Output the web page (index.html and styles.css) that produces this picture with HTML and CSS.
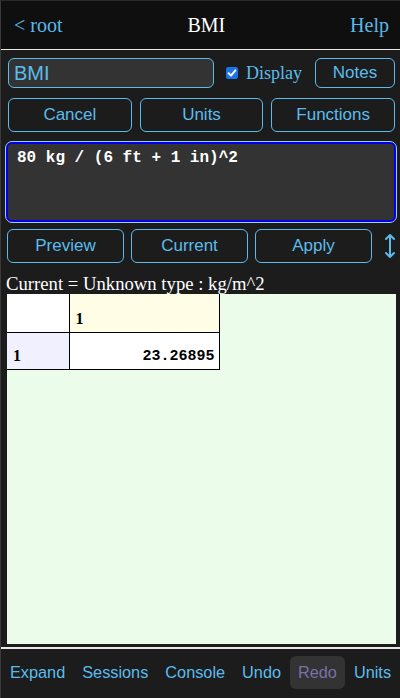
FILE: index.html
```html
<!DOCTYPE html>
<html>
<head>
<meta charset="utf-8">
<link rel="stylesheet" href="styles.css">
</head>
<body>
<div class="app">
  <header class="topbar">
    <span class="link">&lt; root</span>
    <span class="title">BMI</span>
    <span class="link">Help</span>
  </header>
  <main class="content">
    <div class="row row-name">
      <div class="name-input">BMI</div>
      <label class="display"><span class="check"><svg width="12" height="12" viewBox="0 0 12 12"><path d="M2.6 6.2 L5 8.6 L9.4 3.4" fill="none" stroke="#fff" stroke-width="2" stroke-linecap="round" stroke-linejoin="round"/></svg></span>Display</label>
      <button class="btn btn-notes">Notes</button>
    </div>
    <div class="row row-three">
      <button class="btn">Cancel</button>
      <button class="btn">Units</button>
      <button class="btn">Functions</button>
    </div>
    <div class="editor">80 kg / (6 ft + 1 in)^2</div>
    <div class="row row-actions">
      <button class="btn">Preview</button>
      <button class="btn">Current</button>
      <button class="btn">Apply</button>
      <span class="resize"><svg width="12" height="26" viewBox="0 0 12 26"><path d="M6 2 V24 M2 6 L6 2 L10 6 M2 20 L6 24 L10 20" fill="none" stroke="#5bbcec" stroke-width="2" stroke-linecap="round" stroke-linejoin="round"/></svg></span>
    </div>
    <div class="status">Current = Unknown type : kg/m^2</div>
    <div class="output">
      <table class="grid">
        <tr><td class="corner"></td><td class="colhead">1</td></tr>
        <tr><td class="rowhead">1</td><td class="val">23.26895</td></tr>
      </table>
    </div>
  </main>
  <nav class="bottombar">
    <span class="nav">Expand</span>
    <span class="nav">Sessions</span>
    <span class="nav">Console</span>
    <span class="nav">Undo</span>
    <span class="nav nav-disabled">Redo</span>
    <span class="nav">Units</span>
  </nav>
</div>
</body>
</html>
```
FILE: styles.css
```css
* { box-sizing: border-box; }
html, body { margin: 0; padding: 0; }
body { background: #1c1c1c; width: 400px; height: 698px; overflow: hidden; }
.app {
  width: 400px; height: 698px;
  display: flex; flex-direction: column;
  border-left: 1px solid #3a3a3a;
  border-top: 1px solid #2a2a2a;
}
.topbar {
  height: 49px;
  background: #0f0f0f;
  display: flex; align-items: center; justify-content: space-between;
  padding: 0 11px 0 13px;
  font-family: "Liberation Serif", serif;
  font-size: 20px;
  border-bottom: 1px solid #e8e8e8;
}
.link { color: #5bb8e8; }
.title { color: #fff; }
.content {
  flex: 1;
  display: flex; flex-direction: column;
  padding: 8px 4px 3px 5px;
  background: #1c1c1c;
}
.row { display: flex; align-items: center; }
.btn {
  font-family: "Liberation Sans", Arial, sans-serif;
  font-size: 17px;
  color: #5bbcec;
  background: #1c1c1c;
  border: 1px solid #5bbcec;
  border-radius: 6px;
  padding: 0;
}
.row-name { height: 30px; padding-left: 2px; }
.name-input {
  width: 206px; height: 30px;
  border: 1px solid #5bbcec; border-radius: 6px;
  background: #333;
  color: #5bbcec;
  font-family: "Liberation Sans", Arial, sans-serif;
  font-size: 20px;
  padding: 2px 5px 0 5px;
  line-height: 24px;
}
.display {
  display: flex; align-items: center;
  margin-left: 12px;
  color: #5bbcec;
  font-family: "Liberation Serif", serif;
  font-size: 18px;
}
.check {
  width: 12px; height: 12px; border-radius: 2px;
  background: #1a73e8;
  display: inline-flex; align-items: center; justify-content: center;
  margin-right: 8px;
}
.check svg { display: block; }
.btn-notes { width: 80px; height: 30px; margin-left: auto; margin-right: 1px; }
.row-three { margin-top: 10px; gap: 8px; padding-left: 2px; padding-right: 1px; }
.row-three .btn { flex: 1; height: 34px; }
.editor {
  margin-top: 10px;
  height: 80px;
  background: #333;
  border: 2px solid #0000ee;
  outline: 1px solid #9ecbf0;
  border-radius: 6px;
  color: #fff;
  font-family: "Liberation Mono", "Courier New", monospace;
  font-weight: bold;
  font-size: 16px;
  padding: 5px 9px;
  line-height: 18px;
}
.row-actions { margin-top: 7px; gap: 7px; padding-left: 1px; }
.row-actions .btn { width: 118px; height: 34px; }
.resize { display: flex; margin-left: 5px; }
.status {
  margin-top: 10px;
  color: #fff;
  font-family: "Liberation Serif", serif;
  font-size: 18.7px;
  line-height: 21px;
  padding-left: 0;
}
.output {
  flex: 1;
  background: #ebfceb;
  margin-left: 1px;
}
.grid {
  border-collapse: collapse;
  font-family: "Liberation Serif", serif;
  font-weight: bold;
  font-size: 16px;
}
.grid td {
  border: 1px solid #000;
  padding: 0 4px 0 6px;
  vertical-align: bottom;
}
.grid tr:first-child td { height: 38px; padding-bottom: 4px; border-top: none; }
.grid tr:last-child td { height: 37px; padding-bottom: 4px; }
.grid td:first-child { border-left: none; }
.corner { width: 62px; background: #fff; }
.colhead { width: 150px; background: #fffde6; }
.rowhead { background: #f0f0fe; }
.val {
  background: #fff;
  text-align: right;
  font-family: "Liberation Mono", "Courier New", monospace;
  font-size: 15px;
  padding-right: 10px;
}
.bottombar {
  height: 51px;
  border-top: 2px solid #e8e8e8;
  background: #1c1c1c;
  display: flex; align-items: center;
  padding: 0 0 2px 0.5px;
  font-family: "Liberation Sans", Arial, sans-serif;
  font-size: 16.3px;
}
.nav { color: #5bbcec; padding: 7px 8.5px; white-space: nowrap; }
.nav-disabled {
  color: #7a70a8;
  background: #333;
  border-radius: 6px;
}
```
